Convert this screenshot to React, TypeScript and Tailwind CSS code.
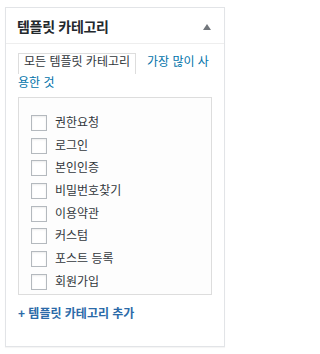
const items = ['권한요청', '로그인', '본인인증', '비밀번호찾기', '이용약관', '커스텀', '포스트 등록', '회원가입'];

function Checkbox() {
  return <span className="block size-[16px] shrink-0 border border-[#b4b9be] bg-white shadow-[inset_0_1px_2px_rgba(0,0,0,0.08)]" />;
}

export default function App() {
  return (
    <div className="min-h-[354px] bg-white pt-[7px] pl-[5px] font-['Liberation_Sans','Noto_Sans_CJK_KR',sans-serif]">
      <div className="w-[220px] border border-[#e2e4e7] bg-white pb-[23px] shadow-[0_1px_1px_rgba(0,0,0,0.04)]">
        <div className="flex h-[36px] items-center justify-between border-b border-[#eeeeee] pt-[3px] pr-[13px] pl-[11px]">
          <h2 className="text-[14px] leading-[18px] font-bold tracking-[-0.3px] text-[#23282d]">템플릿 카테고리</h2>
          <svg width="8" height="6" viewBox="0 0 8 6" className="mb-[1px]">
            <polygon points="4,0 8,6 0,6" fill="#72777c" />
          </svg>
        </div>
        <div className="px-[12px] pt-[9px]">
          <div className="text-[12px] leading-[18px]">
            <span className="mr-[11px] inline-block border border-b-0 border-[#dddddd] px-[5px] pb-[3px] align-top leading-[17px] text-[#32373c]">모든 템플릿 카테고리</span>
            <a className="text-[#0073aa]">가장 많이 사용한 것</a>
          </div>
          <div className="mt-[5px] border border-[#dddddd] bg-[#fdfdfd] pt-[17px] pb-[4px] pl-[12px]">
            <ul className="flex flex-col gap-[6.7px]">
              {items.map((it) => (
                <li key={it} className="flex h-[16px] items-center gap-[8px]">
                  <Checkbox />
                  <span className="text-[12px] leading-[16px] text-[#32373c]">{it}</span>
                </li>
              ))}
            </ul>
          </div>
          <a className="mt-[10px] block text-[12px] leading-[18px] font-bold text-[#2b6aa8]">+ 템플릿 카테고리 추가</a>
        </div>
      </div>
    </div>
  );
}
